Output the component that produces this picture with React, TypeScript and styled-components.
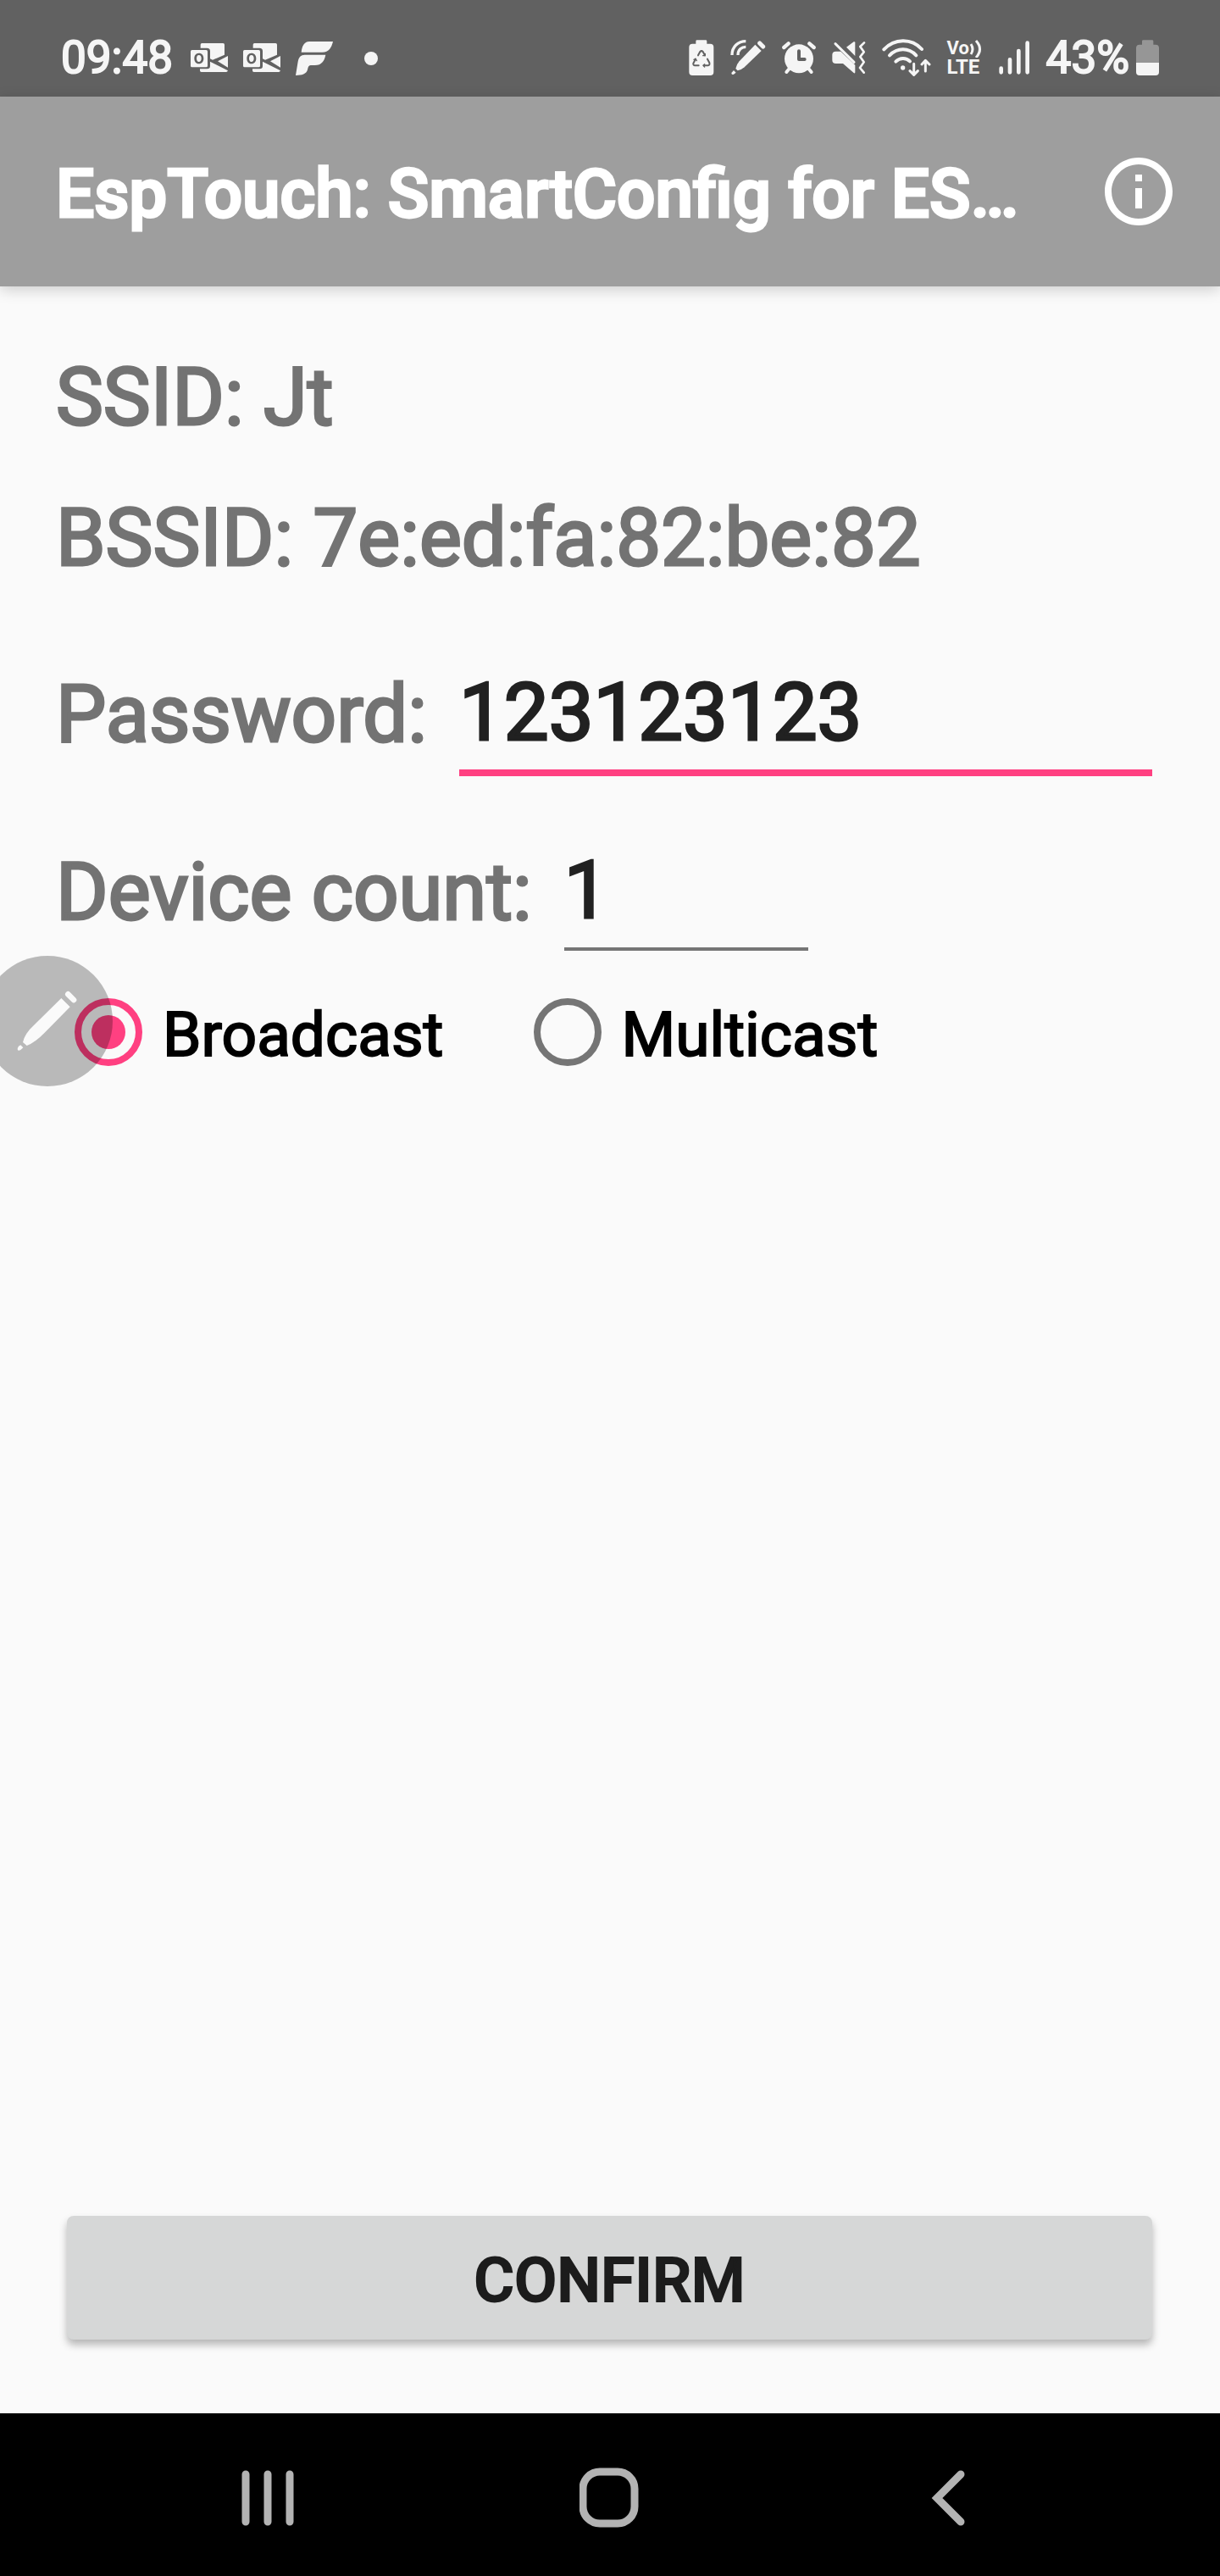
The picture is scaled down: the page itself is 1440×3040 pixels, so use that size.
import React, { useState } from "react";
import styled, { createGlobalStyle } from "styled-components";

const GlobalStyle = createGlobalStyle`
  *, *::before { box-sizing: border-box; }
  body { margin: 0; background: #fafafa; }
  body, button, input { font-family: Roboto, "Liberation Sans", sans-serif; }
`;

const ink = "#f5f5f5";
const shade = "#616161";

const Screen = styled.div`
  display: flex;
  flex-direction: column;
  min-height: 100vh;
  background: #fafafa;
`;

const StatusBar = styled.header`
  display: flex;
  justify-content: space-between;
  align-items: center;
  height: 114px;
  padding: 22px 72px 0;
  background: ${shade};
  color: ${ink};
`;

const StatusGroup = styled.div<{ $gap: number }>`
  display: flex;
  align-items: center;
  gap: ${(p) => p.$gap}px;
`;

const StatusText = styled.span`
  font-size: 53px;
  line-height: 64px;
  -webkit-text-stroke: 2px currentColor;
`;

const Glyph = styled.svg<{ $w: number }>`
  display: block;
  flex: none;
  width: ${(p) => p.$w}px;
  height: 44px;
  fill: ${ink};
`;

const VolteBadge = styled.div`
  width: 42px;
  font-weight: 700;
  line-height: 22px;
`;

const VolteTop = styled.div`
  display: flex;
  align-items: center;
  height: 22px;
  font-size: 22px;
`;

const VolteBottom = styled.div`
  font-size: 24px;
`;

const AppBar = styled.div`
  display: flex;
  align-items: center;
  justify-content: space-between;
  height: 224px;
  padding: 0 48px 0 66px;
  background: #9e9e9e;
  box-shadow: 0 4px 16px rgba(0, 0, 0, 0.18);
`;

const Title = styled.h1`
  margin: 0;
  padding-top: 6px;
  font-size: 80px;
  line-height: 96px;
  font-weight: 500;
  -webkit-text-stroke: 3px currentColor;
  color: #fff;
  white-space: nowrap;
`;

const IconButton = styled.button`
  width: 96px;
  height: 96px;
  padding: 0;
  border: 0;
  background: none;
`;

const Form = styled.form`
  flex: 1;
  display: flex;
  flex-direction: column;
  padding: 75px 80px 87px 66px;
`;

const InfoLine = styled.p`
  margin: 0 0 54px;
  font-size: 94px;
  line-height: 112px;
  -webkit-text-stroke: 3px currentColor;
  color: #737373;
`;

const Fields = styled.div`
  display: flex;
  flex-direction: column;
  gap: 60px;
  margin-top: 23px;
`;

const Field = styled.div`
  display: flex;
  align-items: center;
  gap: 38px;
`;

const FieldLabel = styled.label`
  font-size: 94px;
  line-height: 112px;
  -webkit-text-stroke: 3px currentColor;
  color: #737373;
  white-space: nowrap;
`;

const TextInput = styled.input<{ $active?: boolean }>`
  flex: ${(p) => (p.$active ? "1 1 0" : "0 0 288px")};
  min-width: 0;
  height: 150px;
  padding: 0 0 4px;
  border: 0;
  outline: 0;
  background: linear-gradient(
      ${(p) => (p.$active ? "#ff4081, #ff4081" : "#757575, #757575")}
    )
    no-repeat 0 140px / 100% ${(p) => (p.$active ? 8 : 4)}px;
  font-size: 94px;
  -webkit-text-stroke: 3px currentColor;
  color: #212121;
`;

const Modes = styled.div`
  position: relative;
  display: flex;
  gap: 106px;
  margin: 50px 0 0 22px;
`;

const Mode = styled.label`
  display: flex;
  align-items: center;
  gap: 24px;
  height: 80px;
  font-size: 73px;
  line-height: 88px;
  -webkit-text-stroke: 2px currentColor;
  color: #000;
`;

const ModeText = styled.span`
  padding-top: 6px;
`;

const Radio = styled.input`
  appearance: none;
  display: grid;
  place-items: center;
  width: 80px;
  height: 80px;
  margin: 0;
  border: 8px solid #757575;
  border-radius: 50%;

  &:checked {
    border-color: #ff4081;
  }
  &:checked::before {
    content: "";
    width: 40px;
    height: 40px;
    border-radius: 50%;
    background: #ff4081;
  }
`;

const PenBubble = styled.button`
  position: absolute;
  left: -109px;
  top: -50px;
  width: 154px;
  height: 154px;
  padding: 0;
  border: 0;
  border-radius: 50%;
  background: rgba(0, 0, 0, 0.26);
`;

const Confirm = styled.button`
  height: 146px;
  margin: auto 0 0 13px;
  padding: 6px 0 0;
  border: 0;
  border-radius: 8px;
  background: #d6d7d7;
  box-shadow: 0 6px 10px rgba(0, 0, 0, 0.28);
  font-size: 73px;
  font-weight: 500;
  -webkit-text-stroke: 2px currentColor;
  color: #1c1c1c;
`;

const NavBar = styled.nav`
  display: flex;
  justify-content: center;
  height: 192px;
  padding-top: 8px;
  background: #000;
`;

const NavButton = styled.button`
  display: grid;
  place-items: center;
  width: 28%;
  padding: 0;
  border: 0;
  background: none;
`;

const Block = styled.svg`
  display: block;
`;

function Outlook() {
  return (
    <Glyph $w={44} viewBox="528 78 132 132">
      <path d="M568 93H643Q648 93 648 98V134L606 152L597 148V121Q597 110 586 110H563V98Q563 93 568 93Z" />
      <path d="M660 138V179L624 157Z" />
      <path d="M597 158L660 190Q658 195 654 195H566Q561 195 561 190V184H586Q597 184 597 174Z" />
      <path
        fillRule="evenodd"
        d="M533 117H583Q588 117 588 122V173Q588 178 583 178H533Q528 178 528 173V122Q528 117 533 117ZM557 128C546 128 541 137 541 147C541 158 547 166 557 166C568 166 574 158 574 147C574 136 568 128 557 128ZM557 135C563 135 566 140 566 147C566 154 563 159 557 159C552 159 549 154 549 147C549 140 552 135 557 135Z"
      />
    </Glyph>
  );
}

function FlagF() {
  return (
    <Glyph $w={44} viewBox="900 78 132 132">
      <path d="M948 87H1032C1027 108 1018 125 994 125H920C922 103 930 88 948 87Z" />
      <path d="M932 134H1006C1002 155 992 171 968 171H953C944 173 944 180 942 187C938 202 922 207 900 207L908 158C911 142 918 134 932 134Z" />
    </Glyph>
  );
}

function BatteryCare() {
  return (
    <Glyph $w={30} viewBox="68 78 90 132">
      <path d="M97 82H128Q132 82 132 86V95H144Q156 95 156 107V195Q156 207 144 207H81Q69 207 69 195V107Q69 95 81 95H93V86Q93 82 97 82Z" />
      <g fill="none" stroke={shade} strokeWidth="6" strokeLinecap="round" strokeLinejoin="round">
        <path d="M101 136L108 123Q113 118 118 123L125 136" />
        <path d="M92 149L84 164Q83 171 90 172H103" />
        <path d="M134 149L141 162Q143 171 136 172H121" />
        <path d="M118 137H126V130M86 151L92 148L96 155M124 167L119 172L124 177" strokeWidth="4" />
      </g>
    </Glyph>
  );
}

function PenSignal() {
  return (
    <Glyph $w={42} viewBox="212 78 126 132">
      <path d="M300 98L322 120L262 178Q249 189 238 190L231 183Q234 168 244 157Z" />
      <path d="M316 93L328 105" stroke={ink} strokeWidth="15" strokeLinecap="round" />
      <path d="M224 189L232 197L224 203Q216 206 216 198Z" />
      <g fill="none" stroke={ink} strokeWidth="10">
        <path d="M218 135C218 104 240 86 267 86" />
        <path d="M239 135C239 116 252 106 267 106" />
      </g>
    </Glyph>
  );
}

function Alarm() {
  return (
    <Glyph $w={40} viewBox="390 78 120 132">
      <circle cx="450" cy="148" r="51" />
      <g fill="none" stroke={ink} strokeLinecap="round">
        <path d="M397 108L413 94M503 108L487 94" strokeWidth="13" />
        <path d="M406 195L416 183M494 195L484 183" strokeWidth="12" />
      </g>
      <path d="M450 121V150H470" fill="none" stroke={shade} strokeWidth="12" strokeLinecap="round" strokeLinejoin="round" />
    </Glyph>
  );
}

function MuteVibrate() {
  return (
    <Glyph $w={40} viewBox="572 78 120 132">
      <path d="M623 107L649 88Q654 86 654 91V138Z" />
      <path d="M586 122H603L654 170V196Q654 201 649 198L611 165H586Q573 165 573 153V134Q573 122 586 122Z" />
      <path d="M584 95L650 160" stroke={ink} strokeWidth="9" strokeLinecap="round" />
      <path d="M686 91L672 105L685 124L672 141L685 160L671 180L685 197" fill="none" stroke={ink} strokeWidth="8" strokeLinecap="round" strokeLinejoin="round" />
    </Glyph>
  );
}

function Wifi() {
  return (
    <Glyph $w={58} viewBox="746 78 174 132">
      <g fill="none" stroke={ink} strokeWidth="12" strokeLinecap="round">
        <path d="M753 115C790 76 850 74 887 114" />
        <path d="M773 136C801 108 840 108 867 136" />
        <path d="M795 158C809 144 831 143 845 157" />
      </g>
      <circle cx="820" cy="180" r="8" />
      <g fill="none" stroke={ink} strokeWidth="9" strokeLinecap="round" strokeLinejoin="round">
        <path d="M859 166V203M845 191L859 205L873 191" />
        <path d="M900 192V155M887 168L900 154L914 168" />
      </g>
    </Glyph>
  );
}

function VoLte() {
  return (
    <VolteBadge>
      <VolteTop>
        Vo
        <Block width="15" height="22" viewBox="0 0 15 22" fill="none" stroke={ink} strokeWidth="3">
          <path d="M2 6Q6 12 2 18M8 2Q17 12 8 22" />
        </Block>
      </VolteTop>
      <VolteBottom>LTE</VolteBottom>
    </VolteBadge>
  );
}

function Signal() {
  return (
    <Glyph $w={37} viewBox="292 78 111 132">
      <path d="M300 182V196M331 151V196M362 120V196M393 92V196" stroke={ink} strokeWidth="14" strokeLinecap="round" />
    </Glyph>
  );
}

function BatteryLevel() {
  return (
    <Glyph $w={27} viewBox="783 78 81 132">
      <path d="M808 82H840Q844 82 844 86V98H852Q864 98 864 110V162H783V110Q783 98 795 98H804V86Q804 82 808 82Z" fill="#969696" />
      <path d="M783 162H864V195Q864 207 852 207H795Q783 207 783 195Z" />
    </Glyph>
  );
}

export default function App() {
  const [password, setPassword] = useState("123123123");
  const [count, setCount] = useState("1");
  const [mode, setMode] = useState("Broadcast");

  return (
    <Screen>
      <GlobalStyle />
      <StatusBar>
        <StatusGroup $gap={21}>
          <StatusText>09:48</StatusText>
          <StatusGroup $gap={18}>
            <Outlook />
            <Outlook />
            <FlagF />
            <Glyph $w={54} viewBox="0 0 54 44">
              <circle cx="27" cy="23" r="8" />
            </Glyph>
          </StatusGroup>
        </StatusGroup>
        <StatusGroup $gap={19}>
          <BatteryCare />
          <PenSignal />
          <Alarm />
          <MuteVibrate />
          <Wifi />
          <VoLte />
          <Signal />
          <StatusGroup $gap={8}>
            <StatusText>43%</StatusText>
            <BatteryLevel />
          </StatusGroup>
        </StatusGroup>
      </StatusBar>

      <AppBar>
        <Title>EspTouch: SmartConfig for ES…</Title>
        <IconButton type="button" aria-label="About">
          <Block width="96" height="96" viewBox="0 0 24 24" fill="#fff">
            <path d="M11 7h2v2h-2zm0 4h2v6h-2zm1-9C6.480 2 2 6.480 2 12s4.480 10 10 10 10-4.480 10-10S17.520 2 12 2zm0 18c-4.410 0-8-3.590-8-8s3.590-8 8-8 8 3.590 8 8-3.590 8-8 8z" />
          </Block>
        </IconButton>
      </AppBar>

      <Form onSubmit={(e) => e.preventDefault()}>
        <InfoLine>SSID: Jt</InfoLine>
        <InfoLine>BSSID: 7e:ed:fa:82:be:82</InfoLine>
        <Fields>
          <Field>
            <FieldLabel htmlFor="password">Password:</FieldLabel>
            <TextInput id="password" $active value={password} onChange={(e) => setPassword(e.target.value)} />
          </Field>
          <Field>
            <FieldLabel htmlFor="count">Device count:</FieldLabel>
            <TextInput id="count" inputMode="numeric" value={count} onChange={(e) => setCount(e.target.value)} />
          </Field>
        </Fields>
        <Modes>
          {["Broadcast", "Multicast"].map((name) => (
            <Mode key={name}>
              <Radio type="radio" name="mode" checked={mode === name} onChange={() => setMode(name)} />
              <ModeText>{name}</ModeText>
            </Mode>
          ))}
          <PenBubble type="button" aria-label="Pen menu">
            <Block width="154" height="154" viewBox="-63 84 462 462" fill="#fafafa">
              <path d="M217 234L248 265L158 356Q126 389 95 402L81 390Q88 359 119 331Z" />
              <path d="M241 220L261 240" stroke="#fafafa" strokeWidth="20" strokeLinecap="round" />
              <path d="M73 400L82 409L73 417Q62 422 62 414Q62 406 73 400Z" />
            </Block>
          </PenBubble>
        </Modes>
        <Confirm type="submit">CONFIRM</Confirm>
      </Form>

      <NavBar>
        <NavButton type="button" aria-label="Recent apps">
          <Block width="72" height="72" viewBox="0 0 72 72" stroke="#b3b3b3" strokeWidth="9" strokeLinecap="round">
            <path d="M9 8V64M35 8V64M61 8V64" />
          </Block>
        </NavButton>
        <NavButton type="button" aria-label="Home">
          <Block width="72" height="72" viewBox="0 0 72 72" fill="none" stroke="#b3b3b3" strokeWidth="9">
            <rect x="4" y="5" width="61" height="61" rx="20" />
          </Block>
        </NavButton>
        <NavButton type="button" aria-label="Back">
          <Block width="72" height="72" viewBox="0 0 72 72" fill="none" stroke="#b3b3b3" strokeWidth="9" strokeLinecap="round">
            <path d="M47 8L19 36L47 64" />
          </Block>
        </NavButton>
      </NavBar>
    </Screen>
  );
}
